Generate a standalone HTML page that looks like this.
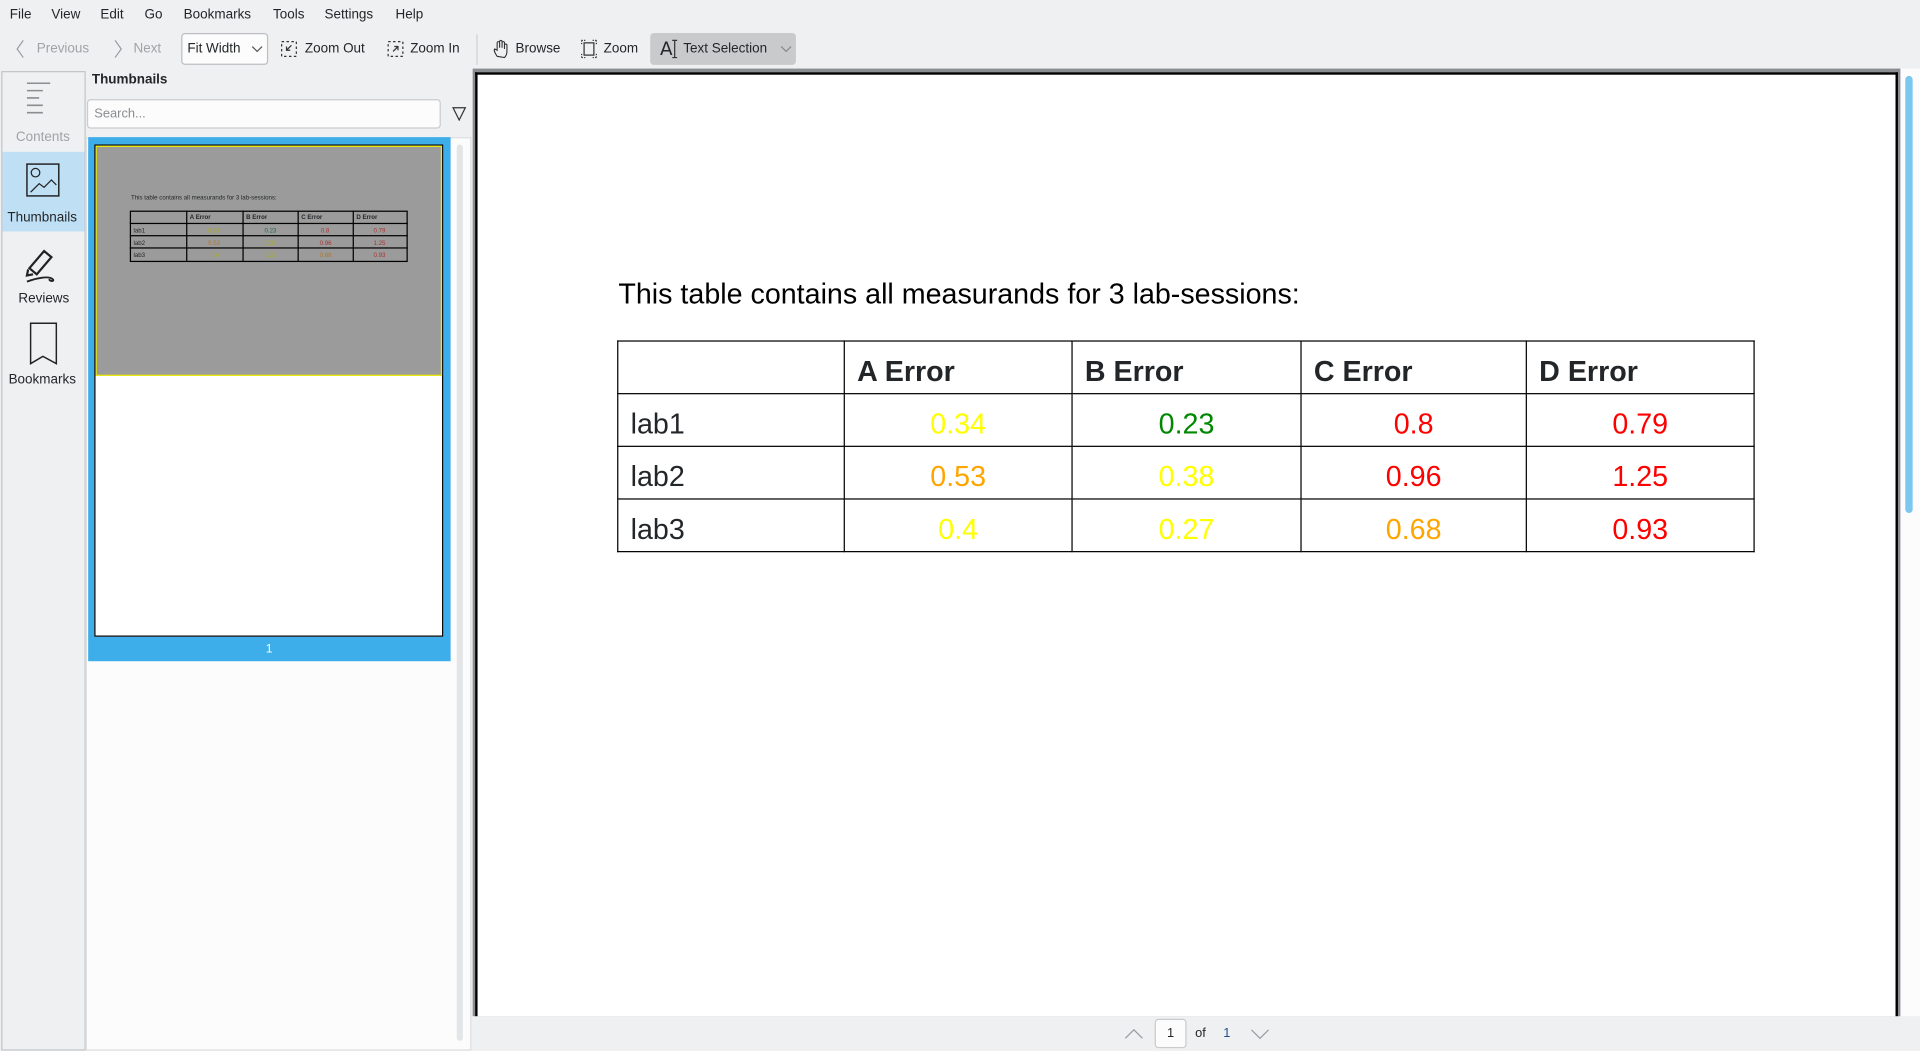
<!DOCTYPE html>
<html><head><meta charset="utf-8"><style>
*{box-sizing:border-box;margin:0;padding:0}
html,body{width:1920px;height:1051px;overflow:hidden;background:#eff0f1}
#w{position:absolute;left:0;top:0;width:1568px;height:858px;transform:scale(1.22449);transform-origin:0 0;background:#eff0f1;font-family:"Liberation Sans","DejaVu Sans",sans-serif;font-size:11px;color:#232629}
.a{position:absolute}
.m span{position:absolute;top:6px}
.tb{position:absolute;top:34px;font-size:11px}
.pdf{font-family:"Liberation Sans",Arial,sans-serif}
table{border-collapse:collapse}
td{border:1px solid #000;height:43px;font-size:23.4px;padding:6px 10px 0}
</style></head><body><div id="w">
<div class="m">
<span style="left:8px">File</span><span style="left:42px">View</span><span style="left:82px">Edit</span><span style="left:118px">Go</span><span style="left:150px">Bookmarks</span><span style="left:223px">Tools</span><span style="left:265px">Settings</span><span style="left:323px">Help</span>
</div>
<svg class="a" style="left:12px;top:32px" width="10" height="16"><path d="M7 1 L2 8 L7 15" stroke="#9a9ea3" fill="none"/></svg>
<span class="tb" style="left:30px;color:#a0a3a7">Previous</span>
<svg class="a" style="left:92px;top:32px" width="10" height="16"><path d="M2 1 L7 8 L2 15" stroke="#9a9ea3" fill="none"/></svg>
<span class="tb" style="left:109px;color:#a0a3a7">Next</span>
<div class="a" style="left:148px;top:27px;width:71px;height:26px;border:1px solid #bcbec1;border-radius:3px;background:#fcfcfc"></div>
<span class="tb" style="left:153px">Fit Width</span>
<svg class="a" style="left:205px;top:36px" width="10" height="8"><path d="M1 2 L5 6 L9 2" stroke="#555" fill="none"/></svg>
<svg class="a" style="left:229px;top:33px" width="14" height="14"><rect x="1" y="1" width="12" height="12" fill="none" stroke="#333" stroke-dasharray="2 2"/><path d="M9 4 L5 8 M5 5 V8 H8" stroke="#333" fill="none"/></svg>
<span class="tb" style="left:249px">Zoom Out</span>
<svg class="a" style="left:316px;top:33px" width="14" height="14"><rect x="1" y="1" width="12" height="12" fill="none" stroke="#333" stroke-dasharray="2 2"/><path d="M5 9 L9 5 M6 5 H9 V8" stroke="#333" fill="none"/></svg>
<span class="tb" style="left:335px">Zoom In</span>
<div class="a" style="left:389px;top:28px;width:1px;height:25px;background:#cfd1d3"></div>
<svg class="a" style="left:402px;top:32px" width="14" height="16"><path d="M4 14 C2 11 1 9 2 8 L4 9 V3 a1 1 0 0 1 2 0 V7 V2 a1 1 0 0 1 2 0 V7 V3 a1 1 0 0 1 2 0 V8 V5 a1 1 0 0 1 2 0 V10 C12 12 11 14 10 15 Z" stroke="#333" fill="none" stroke-width=".9"/></svg>
<span class="tb" style="left:421px">Browse</span>
<svg class="a" style="left:474px;top:32px" width="14" height="16"><rect x="3" y="3" width="8" height="10" fill="none" stroke="#333"/><path d="M1 1h3M10 1h3M1 15h3M10 15h3M1 1v3M13 1v3M1 12v3M13 12v3" stroke="#333" stroke-dasharray="1 1"/></svg>
<span class="tb" style="left:493px">Zoom</span>
<div class="a" style="left:531px;top:27px;width:119px;height:26px;background:#c9cacc;border-radius:3px"></div>
<span class="a" style="left:539px;top:31px;font-size:15px;font-family:'DejaVu Sans'">A</span>
<svg class="a" style="left:548px;top:32px" width="6" height="16"><path d="M1 1h4M3 1v14M1 15h4" stroke="#333" fill="none"/></svg>
<span class="tb" style="left:558px">Text Selection</span>
<svg class="a" style="left:637px;top:36px" width="10" height="8"><path d="M1 2 L5 6 L9 2" stroke="#888" fill="none"/></svg>
<div class="a" style="left:1px;top:58px;width:69px;height:800px;border:1px solid #c3c5c8;background:#eff0f1"></div>
<svg class="a" style="left:21px;top:66px" width="22" height="28"><path d="M1 2h19M1 8h13M1 14h10M1 20h13M1 26h13" stroke="#8a8d91" stroke-width="1.3"/></svg>
<span class="a" style="left:13px;top:106px;color:#a0a3a7">Contents</span>
<div class="a" style="left:2px;top:124px;width:67px;height:65px;background:#bfdff5"></div>
<svg class="a" style="left:21px;top:133px" width="29" height="29"><rect x="1" y="1" width="26" height="26" fill="none" stroke="#222" stroke-width="1.2"/><circle cx="8" cy="8" r="3.5" fill="none" stroke="#222"/><path d="M4 24 L11 17 L15 20 L21 14 L25 18" stroke="#222" fill="none"/></svg>
<span class="a" style="left:6px;top:172px;font-size:11px">Thumbnails</span>
<svg class="a" style="left:20px;top:199px" width="30" height="32"><path d="M4 20 L16 6 L22 11 L10 25 Z M3 21 L2 26 L7 25" stroke="#222" fill="none" stroke-width="1.8"/><path d="M2 31 C10 28 20 26 23 29 C25 31 21 31 20 29" stroke="#222" fill="none" stroke-width="1.5"/></svg>
<span class="a" style="left:15px;top:238px">Reviews</span>
<svg class="a" style="left:24px;top:263px" width="24" height="36"><path d="M1 1 H22 V34 L11 28 L1 34 Z" stroke="#222" fill="none" stroke-width="1.2"/></svg>
<span class="a" style="left:7px;top:304px">Bookmarks</span>
<span class="a" style="left:75px;top:59px;font-weight:bold;font-size:11px">Thumbnails</span>
<div class="a" style="left:71px;top:81px;width:289px;height:24px;border:1px solid #c9cbcd;border-radius:3px;background:#fcfcfc"></div>
<span class="a" style="left:77px;top:87px;color:#8a8d91;font-size:10.5px">Search...</span>
<svg class="a" style="left:369px;top:87px" width="12" height="12"><path d="M1 1 H11 L6 11 Z" stroke="#333" fill="none"/></svg>
<div class="a" style="left:70px;top:112px;width:315px;height:746px;background:#fcfcfc;border:1px solid #dcdee0"></div>
<div class="a" style="left:373px;top:118px;width:5px;height:732px;background:#e3e5e7;border-radius:3px"></div>
<div class="a" style="left:72px;top:112px;width:296px;height:428px;background:#3daee9"></div>
<div class="a" style="left:77px;top:118px;width:285px;height:402px;background:#fff;border:1px solid #000"></div>
<div class="a pdf" style="left:78px;top:119px;width:283px;height:188px;background:#9b9b9b;border:1px solid #ee0">
<div class="a" style="left:28px;top:39px;font-size:5px">This table contains all measurands for 3 lab-sessions:</div>
<div class="a" style="left:27px;top:52px;width:227px;height:42px;border:1px solid #000"></div>
<div class="a" style="left:27px;top:62px;width:227px;height:1px;background:#000"></div>
<div class="a" style="left:27px;top:72px;width:227px;height:1px;background:#000"></div>
<div class="a" style="left:27px;top:82px;width:227px;height:1px;background:#000"></div>
<div class="a" style="left:73px;top:52px;width:1px;height:42px;background:#000"></div>
<div class="a" style="left:119px;top:52px;width:1px;height:42px;background:#000"></div>
<div class="a" style="left:164px;top:52px;width:1px;height:42px;background:#000"></div>
<div class="a" style="left:209px;top:52px;width:1px;height:42px;background:#000"></div>
<div class="a" style="left:76px;top:55px;font-size:5px;font-weight:bold">A Error</div><div class="a" style="left:122px;top:55px;font-size:5px;font-weight:bold">B Error</div><div class="a" style="left:167px;top:55px;font-size:5px;font-weight:bold">C Error</div><div class="a" style="left:212px;top:55px;font-size:5px;font-weight:bold">D Error</div>
<div class="a" style="left:30px;top:66px;font-size:5px">lab1</div><div class="a" style="left:30px;top:76px;font-size:5px">lab2</div><div class="a" style="left:30px;top:86px;font-size:5px">lab3</div>
<div class="a" style="left:91px;top:66px;font-size:5px;color:#aa2">0.34</div><div class="a" style="left:137px;top:66px;font-size:5px;color:#264">0.23</div><div class="a" style="left:183px;top:66px;font-size:5px;color:#a33">0.8</div><div class="a" style="left:226px;top:66px;font-size:5px;color:#a33">0.79</div>
<div class="a" style="left:91px;top:76px;font-size:5px;color:#a73">0.53</div><div class="a" style="left:137px;top:76px;font-size:5px;color:#aa2">0.38</div><div class="a" style="left:182px;top:76px;font-size:5px;color:#a33">0.96</div><div class="a" style="left:226px;top:76px;font-size:5px;color:#a33">1.25</div>
<div class="a" style="left:93px;top:86px;font-size:5px;color:#aa2">0.4</div><div class="a" style="left:137px;top:86px;font-size:5px;color:#aa2">0.27</div><div class="a" style="left:182px;top:86px;font-size:5px;color:#a73">0.68</div><div class="a" style="left:226px;top:86px;font-size:5px;color:#a33">0.93</div>
</div>
<span class="a" style="left:217px;top:525px;color:#fff;font-size:10px">1</span>
<div class="a" style="left:386px;top:56px;width:1182px;height:774px;background:#fcfcfc"></div>
<div class="a" style="left:386px;top:56px;width:1166px;height:774px;background:#8a8d91"></div>
<div class="a" style="left:388px;top:59px;width:1162px;height:771px;background:#fff;border:2px solid #000;border-bottom:none"></div>
<div class="a" style="left:1556px;top:62px;width:6px;height:357px;background:#7cc6ef;border-radius:3px"></div>
<div class="a pdf" style="left:505px;top:227px;font-size:23.4px;color:#000">This table contains all measurands for 3 lab-sessions:</div>
<table class="a pdf" style="left:504px;top:278px;width:929px">
<tr style="font-weight:bold"><td style="width:185px"></td><td style="width:186px">A Error</td><td style="width:187px">B Error</td><td style="width:184px">C Error</td><td>D Error</td></tr>
<tr><td>lab1</td><td style="text-align:center;color:#ff0">0.34</td><td style="text-align:center;color:#080">0.23</td><td style="text-align:center;color:#f00">0.8</td><td style="text-align:center;color:#f00">0.79</td></tr>
<tr><td>lab2</td><td style="text-align:center;color:#ffa500">0.53</td><td style="text-align:center;color:#ff0">0.38</td><td style="text-align:center;color:#f00">0.96</td><td style="text-align:center;color:#f00">1.25</td></tr>
<tr><td>lab3</td><td style="text-align:center;color:#ff0">0.4</td><td style="text-align:center;color:#ff0">0.27</td><td style="text-align:center;color:#ffa500">0.68</td><td style="text-align:center;color:#f00">0.93</td></tr>
</table>
<div class="a" style="left:386px;top:830px;width:1182px;height:28px;background:#eff0f1"></div>
<svg class="a" style="left:918px;top:839px" width="16" height="10"><path d="M1 9 L8 2 L15 9" stroke="#9a9ea3" fill="none"/></svg>
<div class="a" style="left:943px;top:832px;width:26px;height:24px;border:1px solid #c9cbcd;border-radius:3px;background:#fcfcfc;text-align:center;line-height:22px;font-size:10.5px">1</div>
<span class="a" style="left:976px;top:838px;font-size:10.5px">of</span>
<span class="a" style="left:999px;top:838px;font-size:10.5px;color:#1d4f91">1</span>
<svg class="a" style="left:1021px;top:840px" width="16" height="10"><path d="M1 1 L8 8 L15 1" stroke="#9a9ea3" fill="none"/></svg>
</div></body></html>
